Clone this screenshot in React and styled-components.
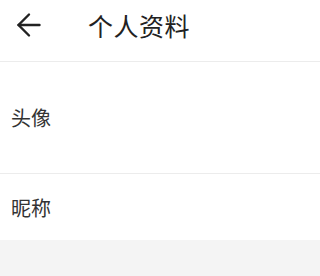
import React from 'react'
import styled, { createGlobalStyle } from 'styled-components'
import { ArrowLeft } from 'lucide-react'

const GlobalStyle = createGlobalStyle`
  html, body {
    margin: 0;
    padding: 0;
    background: #f4f4f4;
    font-family: "Noto Sans CJK SC", "Noto Sans", sans-serif;
  }
`

export default function App() {
  const items = [
    { label: '头像', tall: true },
    { label: '昵称', tall: false },
  ]

  return (
    <Page>
      <GlobalStyle />
      <Header>
        <BackButton>
          <ArrowLeft size={36} strokeWidth={1.6} color="#222" />
        </BackButton>
        <Title>个人资料</Title>
      </Header>
      <List>
        {items.map((item) => (
          <Row key={item.label} $tall={item.tall}>
            <Label>{item.label}</Label>
          </Row>
        ))}
      </List>
    </Page>
  )
}

const Page = styled.div`
  min-height: 276px;
  background: #f4f4f4;
`

const Header = styled.div`
  height: 61px;
  display: flex;
  align-items: center;
  background: #fff;
  border-bottom: 1px solid #ececec;
`

const BackButton = styled.div`
  display: flex;
  margin-left: 11px;
  margin-top: -11px;
  &:hover {
    cursor: pointer;
  }
`

const Title = styled.div`
  margin-left: 41px;
  margin-top: -12px;
  font-size: 25px;
  color: #222;
  letter-spacing: 0.5px;
`

const List = styled.div`
  background: #fff;
`

const Row = styled.div`
  height: ${(p) => (p.$tall ? '111px' : '66px')};
  display: flex;
  align-items: center;
  padding-left: 11px;
  & + & {
    border-top: 1px solid #ececec;
  }
`

const Label = styled.span`
  font-size: 20px;
  color: #333;
`
